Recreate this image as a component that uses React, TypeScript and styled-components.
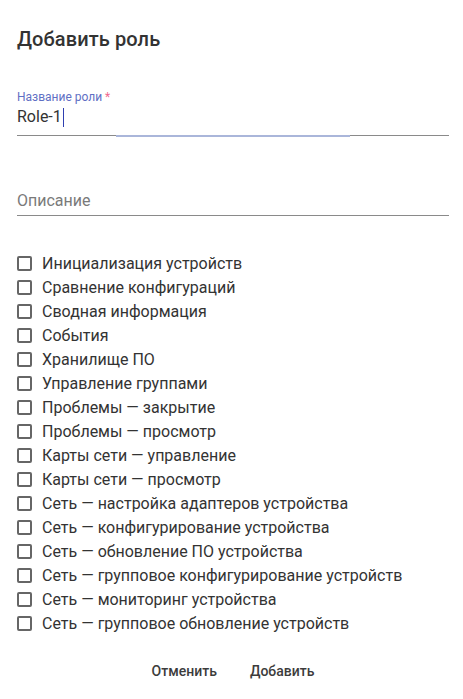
import React from "react"
import styled, { createGlobalStyle } from "styled-components"

const GlobalStyle = createGlobalStyle`
    html, body {
        margin: 0;
        padding: 0;
        background: #ffffff;
        font-family: Roboto, "Noto Sans", sans-serif;
    }
`

const Dialog = styled.div`
    width: 463px;
    height: 699px;
    box-sizing: border-box;
    padding: 0 14px 0 17px;
    display: flex;
    flex-direction: column;
`

const Title = styled.h2`
    margin: 26px 0 0;
    font-size: 20px;
    font-weight: 500;
    line-height: 26px;
    color: #333333;
    letter-spacing: 0.1px;
`

const Field = styled.div<{ $top: number }>`
    margin-top: ${p => p.$top}px;
    position: relative;
    border-bottom: 1px solid #8a8a8a;
`

const FocusLine = styled.span`
    position: absolute;
    left: 99px;
    width: 234px;
    bottom: -2px;
    height: 2px;
    background: #aab6da;
`

const Label = styled.div`
    font-size: 12px;
    line-height: 14px;
    color: #5f6fc4;
`

const Star = styled.span`
    color: #f06a8e;
`

const Value = styled.div`
    font-size: 16px;
    line-height: 20px;
    color: #333333;
    padding: 3px 0 8px;
    display: flex;
    align-items: center;
`

const Caret = styled.span`
    display: inline-block;
    width: 1px;
    height: 19px;
    background: #2f3fb0;
    margin-left: 1px;
`

const Placeholder = styled.div`
    font-size: 16px;
    line-height: 20px;
    color: #7a7a7a;
    padding: 0 0 4px;
`

const List = styled.div`
    margin-top: 36px;
    display: flex;
    flex-direction: column;
`

const Row = styled.label`
    display: flex;
    align-items: center;
    height: 23.95px;
    font-size: 16px;
    color: #333333;
    gap: 10px;
`

const Box = styled.span`
    width: 11px;
    height: 11px;
    border: 2px solid #666666;
    border-radius: 2px;
    flex-shrink: 0;
`

const Actions = styled.div`
    margin-top: 28px;
    display: flex;
    justify-content: center;
    gap: 33px;
`

const Button = styled.button`
    background: none;
    border: none;
    padding: 0;
    font-family: Roboto, "Noto Sans", sans-serif;
    font-size: 14px;
    font-weight: 500;
    color: #3c3c3c;
    cursor: pointer;
`

const permissions = [
    "Инициализация устройств",
    "Сравнение конфигураций",
    "Сводная информация",
    "События",
    "Хранилище ПО",
    "Управление группами",
    "Проблемы — закрытие",
    "Проблемы — просмотр",
    "Карты сети — управление",
    "Карты сети — просмотр",
    "Сеть — настройка адаптеров устройства",
    "Сеть — конфигурирование устройства",
    "Сеть — обновление ПО устройства",
    "Сеть — групповое конфигурирование устройств",
    "Сеть — мониторинг устройства",
    "Сеть — групповое обновление устройств",
]

const App = () => {
    return (
        <Dialog>
            <GlobalStyle />
            <Title>Добавить роль</Title>
            <Field $top={38}>
                <Label>Название роли <Star>*</Star></Label>
                <Value>Role-1<Caret /></Value>
                <FocusLine />
            </Field>
            <Field $top={55}>
                <Placeholder>Описание</Placeholder>
            </Field>
            <List>
                {permissions.map(p => (
                    <Row key={p}>
                        <Box />
                        <span>{p}</span>
                    </Row>
                ))}
            </List>
            <Actions>
                <Button>Отменить</Button>
                <Button>Добавить</Button>
            </Actions>
        </Dialog>
    )
}

export default App
